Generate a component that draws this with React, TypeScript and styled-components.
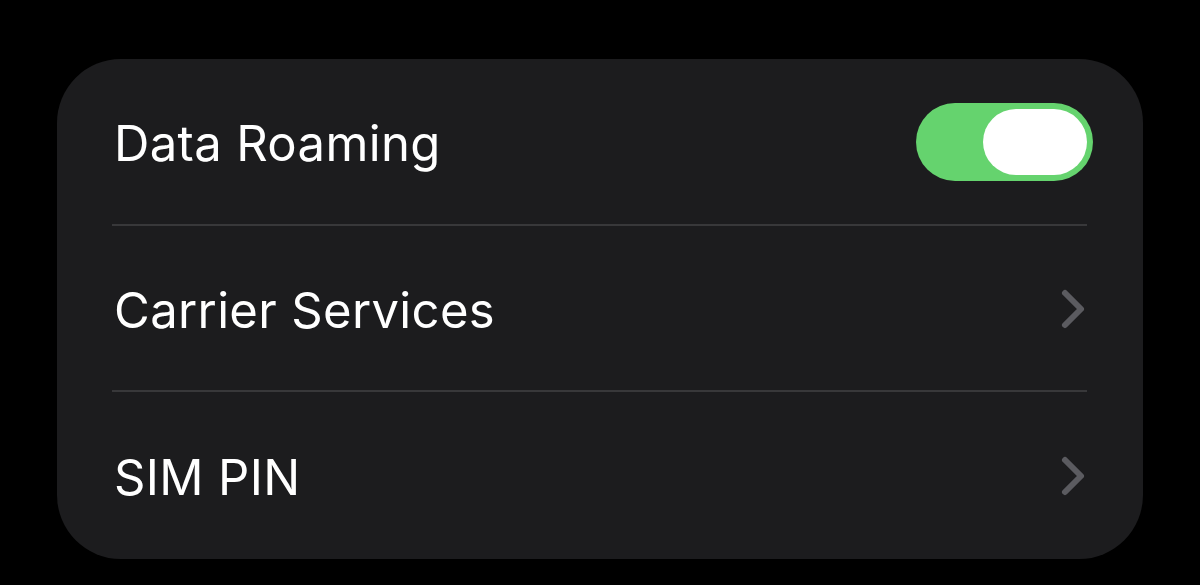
import React, { FC, useState } from "react";
import styled, { createGlobalStyle } from "styled-components";

const GlobalStyle = createGlobalStyle`
    html, body {
        margin: 0;
        padding: 0;
        background: #000;
    }
    body {
        font-family: Inter, "Noto Sans", "Liberation Sans", sans-serif;
        -webkit-font-smoothing: antialiased;
    }
`

const Page = styled.div`
    width: 1200px;
    height: 585px;
    box-sizing: border-box;
    padding: 59px 57px 26px 57px;
    background: #000;
`

const Card = styled.div`
    display: flex;
    flex-direction: column;
    height: 500px;
    background: #1c1c1e;
    border-radius: 64px;
    overflow: hidden;
`

const Row = styled.div<{ $divider?: boolean }>`
    position: relative;
    flex: 1;
    display: flex;
    align-items: center;
    justify-content: space-between;
    padding: 0 50px 0 57px;

    &::after {
        content: "";
        display: ${p => p.$divider ? "block" : "none"};
        position: absolute;
        left: 55px;
        right: 56px;
        bottom: 0;
        height: 2px;
        background: #38383a;
    }
`

const Label = styled.span`
    color: #fff;
    font-size: 49px;
    font-weight: 400;
    letter-spacing: 0.35px;
    padding-top: 3px;
`

const Track = styled.button<{ $on: boolean }>`
    position: relative;
    width: 177px;
    height: 78px;
    padding: 0;
    border: none;
    border-radius: 39px;
    background: ${p => p.$on ? "#65d36e" : "#39393d"};
    cursor: pointer;
`

const Knob = styled.span<{ $on: boolean }>`
    position: absolute;
    top: 6px;
    left: ${p => p.$on ? "67px" : "6px"};
    width: 104px;
    height: 66px;
    border-radius: 33px;
    background: #fff;
    transition: left 0.2s;
`

const Chevron = styled.svg`
    width: 28px;
    height: 44px;
    margin-right: 6px;
`

const Toggle: FC<{ on: boolean, onChange: () => void }> = ({ on, onChange }) => (
    <Track $on={on} onClick={onChange}>
        <Knob $on={on} />
    </Track>
)

const Disclosure = () => (
    <Chevron viewBox="0 0 28 44">
        <path d="M6 6 L22 22 L6 38" fill="none" stroke="#5b5b60" strokeWidth="6" strokeLinecap="round" strokeLinejoin="round" />
    </Chevron>
)

const App = () => {
    const [ roaming, setRoaming ] = useState(true);

    return (
        <>
            <GlobalStyle />
            <Page>
                <Card>
                    <Row $divider>
                        <Label>Data Roaming</Label>
                        <Toggle on={roaming} onChange={() => setRoaming(!roaming)} />
                    </Row>
                    <Row $divider>
                        <Label>Carrier Services</Label>
                        <Disclosure />
                    </Row>
                    <Row>
                        <Label>SIM PIN</Label>
                        <Disclosure />
                    </Row>
                </Card>
            </Page>
        </>
    )
}

export default App;
